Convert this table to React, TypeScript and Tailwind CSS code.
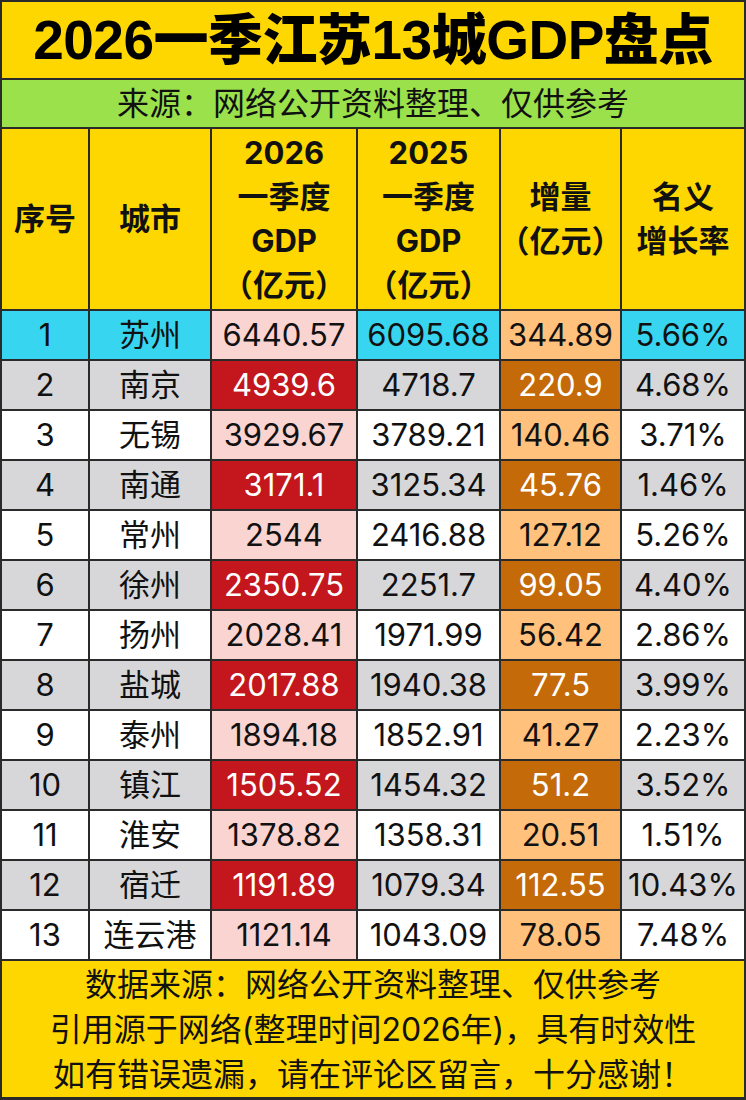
const FONT = "font-['Inter','Noto_Sans_CJK_SC',sans-serif]";

type Row = [string, string, string, string, string, string];

const rows: Row[] = [
  ["1", "苏州", "6440.57", "6095.68", "344.89", "5.66%"],
  ["2", "南京", "4939.6", "4718.7", "220.9", "4.68%"],
  ["3", "无锡", "3929.67", "3789.21", "140.46", "3.71%"],
  ["4", "南通", "3171.1", "3125.34", "45.76", "1.46%"],
  ["5", "常州", "2544", "2416.88", "127.12", "5.26%"],
  ["6", "徐州", "2350.75", "2251.7", "99.05", "4.40%"],
  ["7", "扬州", "2028.41", "1971.99", "56.42", "2.86%"],
  ["8", "盐城", "2017.88", "1940.38", "77.5", "3.99%"],
  ["9", "泰州", "1894.18", "1852.91", "41.27", "2.23%"],
  ["10", "镇江", "1505.52", "1454.32", "51.2", "3.52%"],
  ["11", "淮安", "1378.82", "1358.31", "20.51", "1.51%"],
  ["12", "宿迁", "1191.89", "1079.34", "112.55", "10.43%"],
  ["13", "连云港", "1121.14", "1043.09", "78.05", "7.48%"],
];

const headers: string[][] = [
  ["序号"],
  ["城市"],
  ["2026", "一季度", "GDP", "（亿元）"],
  ["2025", "一季度", "GDP", "（亿元）"],
  ["增量", "（亿元）"],
  ["名义", "增长率"],
];

function cellClasses(rowIdx: number, col: number) {
  const first = rowIdx === 0;
  const even = rowIdx % 2 === 1; // 2,4,6...
  if (col === 2) {
    if (even) return "bg-[#c3161d] text-white";
    return "bg-[#fad4d0] text-[#111]";
  }
  if (col === 4) {
    if (even) return "bg-[#c46a09] text-white";
    return "bg-[#ffc17c] text-[#111]";
  }
  if (first) return "bg-[#37d5ef] text-[#111]";
  if (even) return "bg-[#d7d7da] text-[#111]";
  return "bg-white text-[#111]";
}

export default function App() {
  return (
    <div className={`w-[746px] h-[1100px] bg-[#2a2a2a] p-[2px] pb-[3px] flex flex-col gap-[2px] ${FONT}`}>
      <div className="h-[76px] bg-[#ffd700] flex items-center justify-center">
        <h1 className="text-[55px] font-black text-black tracking-[-0.5px] font-['Liberation_Sans','Noto_Sans_CJK_SC',sans-serif]">
          2026一季江苏13城GDP盘点
        </h1>
      </div>

      <div className="h-[47px] bg-[#9be14b] flex items-center justify-center">
        <p className="text-[32px] text-[#111]">来源：网络公开资料整理、仅供参考</p>
      </div>

      <div className="grid grid-cols-[86px_120px_144px_141px_119px_122px] gap-[2px]">
        {headers.map((lines, i) => (
          <div
            key={i}
            className="h-[180px] bg-[#ffd700] flex flex-col items-center justify-center text-[31px] leading-[44px] font-bold text-[#111]"
          >
            {lines.map((l) => (
              <span key={l} className="whitespace-nowrap">{l}</span>
            ))}
          </div>
        ))}

        {rows.map((row, r) =>
          row.map((val, c) => (
            <div
              key={`${r}-${c}`}
              className={`h-[48px] flex items-center justify-center text-[31px] whitespace-nowrap ${cellClasses(r, c)}`}
            >
              {val}
            </div>
          ))
        )}
      </div>

      <div className="flex-1 bg-[#ffd700] flex flex-col items-center justify-center text-[32px] leading-[45px] text-[#111]">
        <p>数据来源：网络公开资料整理、仅供参考</p>
        <p>引用源于网络(整理时间2026年)，具有时效性</p>
        <p>如有错误遗漏，请在评论区留言，十分感谢！</p>
      </div>
    </div>
  );
}
